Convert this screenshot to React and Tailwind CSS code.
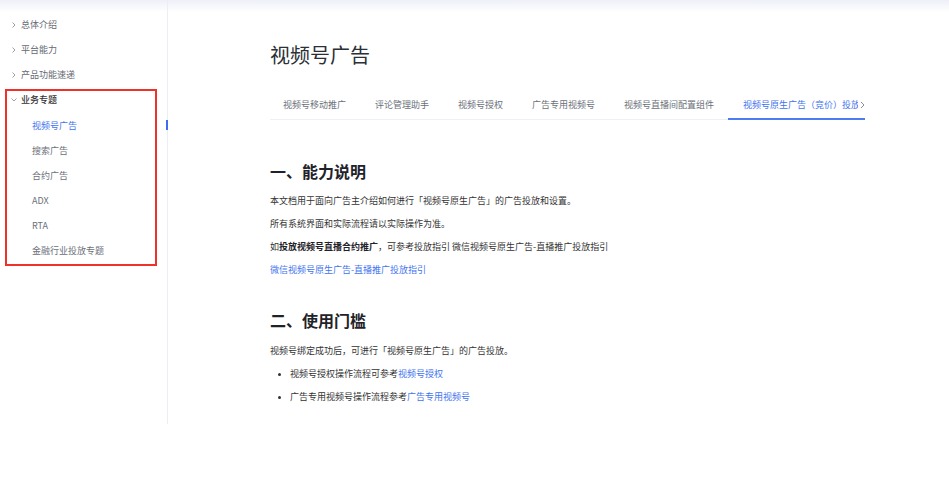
import React from "react";

const font = { fontFamily: '"Noto Sans CJK SC", "Noto Sans", sans-serif' };

function Chevron({ open }) {
  return (
    <svg
      width="8"
      height="8"
      viewBox="0 0 8 8"
      className="shrink-0"
      fill="none"
      stroke="#9aa0aa"
      strokeWidth="1"
    >
      {open ? <path d="M1.5 2.5 L4 5 L6.5 2.5" /> : <path d="M2.5 1.5 L5 4 L2.5 6.5" />}
    </svg>
  );
}

const tabs = [
  "视频号移动推广",
  "评论管理助手",
  "视频号授权",
  "广告专用视频号",
  "视频号直播间配置组件",
];

const subItems = ["视频号广告", "搜索广告", "合约广告", "ADX", "RTA", "金融行业投放专题"];

export default function App() {
  return (
    <div className="relative w-[949px] h-[484px] bg-white overflow-hidden" style={font}>
      <div className="absolute top-0 left-0 w-full h-[12px] bg-gradient-to-b from-[#eef0f8] to-white"></div>

      <div className="relative flex">
        {/* sidebar */}
        <aside className="relative w-[168px] h-[424px] border-r border-[#eceef5] pt-[12px] shrink-0">
          {["总体介绍", "平台能力", "产品功能速递"].map((t) => (
            <div key={t} className="h-[25px] flex items-center pl-[10px] gap-[3px] text-[9px] text-[#666a73]">
              <Chevron />
              <span>{t}</span>
            </div>
          ))}

          <div className="ml-[5px] w-[152px] mt-[1.5px] border-2 border-[#f0312a] pb-[1px]">
            <div className="h-[18px] flex items-center pl-[3px] gap-[3px] text-[9px] text-[#333] font-medium">
              <Chevron open />
              <span>业务专题</span>
            </div>
            <div className="pt-[4.5px]">
              {subItems.map((t, i) => (
                <div
                  key={t}
                  className={
                    "h-[25px] flex items-center pl-[25px] text-[9px] " +
                    (i === 0 ? "text-[#3f74ef]" : "text-[#6b7079]")
                  }
                >
                  {t}
                </div>
              ))}
            </div>
          </div>

          <div className="absolute right-[-1px] top-[120px] w-[2px] h-[10px] bg-[#3c6ef0]"></div>
        </aside>

        {/* main */}
        <main className="pl-[102px] pt-[41px]">
          <h1 className="h-[28px] flex items-center text-[20px] text-[#2b2f36] leading-none">视频号广告</h1>

          <div className="relative mt-[22px] w-[595px] flex border-b border-[#edf1f7]">
            <div className="flex w-[588px] overflow-hidden pl-[13px]">
              {tabs.map((t) => (
                <div
                  key={t}
                  className="h-[28px] pr-[29px] flex items-center whitespace-nowrap text-[9px] text-[#6b7079] shrink-0"
                >
                  {t}
                </div>
              ))}
              <div className="h-[28px] flex items-center whitespace-nowrap text-[9px] text-[#3f74ef] shrink-0">
                视频号原生广告（竞价）投放
              </div>
            </div>
            <div className="w-[7px] h-[28px] flex items-center justify-end shrink-0">
              <svg width="5" height="8" viewBox="0 0 5 8" fill="none" stroke="#8a8f98" strokeWidth="1">
                <path d="M1 1 L4 4 L1 7" />
              </svg>
            </div>
            <div className="absolute right-0 bottom-[-1px] w-[137px] h-[2px] bg-[#4b7cf2]"></div>
          </div>

          <h2 className="mt-[39px] h-[24px] flex items-center text-[16px] font-bold text-[#1f2329]">一、能力说明</h2>

          <div className="mt-[6.5px] text-[9px] text-[#333]">
            <p className="h-[23px] flex items-center">本文档用于面向广告主介绍如何进行「视频号原生广告」的广告投放和设置。</p>
            <p className="h-[23px] flex items-center">所有系统界面和实际流程请以实际操作为准。</p>
            <p className="h-[23px] flex items-center whitespace-pre">
              如<span className="font-bold text-[#1f2329]">投放视频号直播合约推广</span>，可参考投放指引 微信视频号原生广告-直播推广投放指引
            </p>
            <p className="h-[23px] flex items-center text-[#3f74ef]">微信视频号原生广告-直播推广投放指引</p>
          </div>

          <h2 className="mt-[26.5px] h-[24px] flex items-center text-[16px] font-bold text-[#1f2329]">二、使用门槛</h2>

          <div className="mt-[7.5px] text-[9px] text-[#333]">
            <p className="h-[23px] flex items-center">视频号绑定成功后，可进行「视频号原生广告」的广告投放。</p>
            <ul>
              <li className="h-[23px] flex items-center pl-[8px]">
                <span className="w-[3px] h-[3px] rounded-full bg-[#333] mr-[9px]"></span>
                视频号授权操作流程可参考<span className="text-[#3f74ef]">视频号授权</span>
              </li>
              <li className="h-[23px] flex items-center pl-[8px]">
                <span className="w-[3px] h-[3px] rounded-full bg-[#333] mr-[9px]"></span>
                广告专用视频号操作流程参考<span className="text-[#3f74ef]">广告专用视频号</span>
              </li>
            </ul>
          </div>
        </main>
      </div>
    </div>
  );
}
